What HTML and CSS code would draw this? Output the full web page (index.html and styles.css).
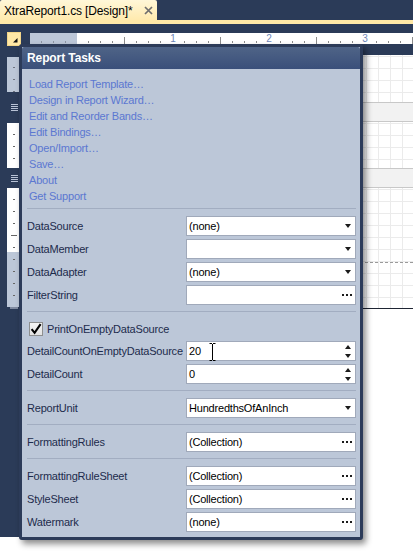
FILE: index.html
```html
<!DOCTYPE html>
<html>
<head>
<meta charset="utf-8">
<title>XtraReport1.cs [Design]</title>
<link rel="stylesheet" href="styles.css">
</head>
<body>
<div class="ide">
  <div class="tabstrip">
    <div class="tab">
      <span class="tab-title">XtraReport1.cs [Design]*</span>
      <svg class="tab-close" width="9" height="9" viewBox="0 0 9 9"><path d="M1 1L8 8M8 1L1 8" stroke="#6e6e6e" stroke-width="1.7" fill="none"/></svg>
    </div>
  </div>
  <div class="tabline"></div>
  <div class="designer">
    <div class="ruler-row">
      <div class="smart-btn"><svg width="14" height="14" viewBox="0 0 14 14"><path d="M10.5 6V10.5H6Z" fill="#111"/></svg></div>
      <div class="hruler">
        <div class="hr-margin"></div>
        <div class="hr-inch"><span class="hr-num">1</span></div>
        <div class="hr-inch"><span class="hr-num">2</span></div>
        <div class="hr-inch"><span class="hr-num">3</span></div>
        <div class="hr-inch"></div>
      </div>
    </div>
    <div class="work">
      <div class="vruler">
        <div class="vr-sec vr-a"></div>
        <div class="vr-gap vr-gap1"><span class="band-ico"></span></div>
        <div class="vr-sec vr-b"></div>
        <div class="vr-gap vr-gap2"><span class="band-ico"></span></div>
        <div class="vr-sec vr-c"></div>
        <div class="vr-end"></div>
      </div>
      <div class="surface">
        <div class="grid g1"></div>
        <div class="band-head"></div>
        <div class="grid g2"></div>
        <div class="band-head"></div>
        <div class="grid g3"><div class="margin-line"></div></div>
        <div class="page-end"></div>
      </div>
    </div>
  </div>

  <div class="tasks">
    <div class="tasks-head">Report Tasks</div>
    <div class="tasks-body">
      <div class="links">
        <a class="link">Load Report Template…</a>
        <a class="link">Design in Report Wizard…</a>
        <a class="link">Edit and Reorder Bands…</a>
        <a class="link">Edit Bindings…</a>
        <a class="link">Open/Import…</a>
        <a class="link">Save…</a>
        <a class="link">About</a>
        <a class="link">Get Support</a>
      </div>
      <div class="sep"></div>
      <div class="props">
        <span class="lbl">DataSource</span>
        <div class="field"><span class="val">(none)</span><span class="dd"></span></div>
        <span class="lbl">DataMember</span>
        <div class="field"><span class="val"></span><span class="dd"></span></div>
        <span class="lbl">DataAdapter</span>
        <div class="field"><span class="val">(none)</span><span class="dd"></span></div>
        <span class="lbl">FilterString</span>
        <div class="field"><span class="val"></span><span class="dots"><i></i><i></i><i></i></span></div>
      </div>
      <div class="sep"></div>
      <div class="props props-check">
        <label class="check-row"><span class="checkbox"><svg width="12" height="12" viewBox="0 0 12 12"><path d="M1.6 6.2L4.6 9.8L10.6 1.2" stroke="#000" stroke-width="2.1" fill="none"/></svg></span><span class="lbl check-lbl">PrintOnEmptyDataSource</span></label>
        <span class="lbl">DetailCountOnEmptyDataSource</span>
        <div class="field"><span class="val">20</span><span class="spin"><i class="up"></i><i class="down"></i></span>
          <svg class="ibeam" width="7" height="18" viewBox="0 0 7 18"><path d="M0.5 0.5H3M4 0.5H6.5M3.5 1V17M0.5 17.5H3M4 17.5H6.5" stroke="#000" stroke-width="1" fill="none"/></svg>
        </div>
        <span class="lbl">DetailCount</span>
        <div class="field"><span class="val">0</span><span class="spin"><i class="up"></i><i class="down"></i></span></div>
      </div>
      <div class="sep"></div>
      <div class="props">
        <span class="lbl">ReportUnit</span>
        <div class="field"><span class="val">HundredthsOfAnInch</span><span class="dd"></span></div>
      </div>
      <div class="sep"></div>
      <div class="props">
        <span class="lbl">FormattingRules</span>
        <div class="field"><span class="val">(Collection)</span><span class="dots"><i></i><i></i><i></i></span></div>
      </div>
      <div class="sep"></div>
      <div class="props props-last">
        <span class="lbl">FormattingRuleSheet</span>
        <div class="field"><span class="val">(Collection)</span><span class="dots"><i></i><i></i><i></i></span></div>
        <span class="lbl">StyleSheet</span>
        <div class="field"><span class="val">(Collection)</span><span class="dots"><i></i><i></i><i></i></span></div>
        <span class="lbl">Watermark</span>
        <div class="field"><span class="val">(none)</span><span class="dots"><i></i><i></i><i></i></span></div>
      </div>
    </div>
  </div>
</div>
</body>
</html>
```
FILE: styles.css
```css
* { box-sizing: border-box; margin: 0; padding: 0; }
html, body { width: 413px; height: 552px; overflow: hidden; }
body {
  background: #ffffff;
  font-family: "Liberation Sans", Arial, sans-serif;
  font-size: 11px;
  color: #000;
}

.ide {
  position: relative;
  height: 537px;
  background-color: #2b3b58;
  display: flex;
  flex-direction: column;
}

/* ---------- document tab ---------- */
.tabstrip { height: 20px; display: flex; }
.tab {
  width: 157px;
  height: 20px;
  background: linear-gradient(#fff7d8, #ffeaae);
  border-radius: 2px 2px 0 0;
  display: flex;
  align-items: center;
  padding: 1px 0 0 4px;
}
.tab-title { font-size: 12px; letter-spacing: -0.15px; color: #000; width: 140px; white-space: nowrap; }
.tab-close { display: block; }
.tabline { height: 4px; background: #ffe8a6; }

/* ---------- designer ---------- */
.designer { flex: 1; display: flex; flex-direction: column; }
.ruler-row {
  display: flex;
  align-items: flex-start;
  height: 14px;
  margin-top: 8px;
  padding-left: 7px;
}
.smart-btn {
  width: 14px;
  height: 14px;
  background: #ffe8a6;
  border: 1px solid #f3d68a;
}
.smart-btn svg { display: block; margin: -1px 0 0 -1px; }

.hruler {
  margin: 1px 0 0 9px;
  height: 11px;
  flex: 1;
  background: #fff;
  display: flex;
  overflow: hidden;
}
.hr-margin {
  flex: 0 0 47px;
  background:
    repeating-linear-gradient(to right, transparent 0 10px, #8d95a3 10px 11px, transparent 11px 12px) 1px 8px / 36px 2px no-repeat,
    #bcc7d8;
}
.hr-inch {
  flex: 0 0 96px;
  display: flex;
  justify-content: flex-end;
  background:
    linear-gradient(to right, transparent 47px, #8c8c8c 47px 48px, transparent 48px) 0 4px / 96px 7px no-repeat,
    repeating-linear-gradient(to right, transparent 0 11px, #8c8c8c 11px 12px) 0 8px / 84px 2px no-repeat;
}
.hr-num {
  width: 6px;
  margin-right: -3px;
  text-align: center;
  font-size: 10px;
  line-height: 11px;
  color: #6f87b8;
}

.work { flex: 1; display: flex; padding-left: 7px; }

/* vertical ruler */
.vruler { width: 12px; margin-top: 11px; display: flex; flex-direction: column; }
.vr-sec { background-repeat: no-repeat; }
.vr-a {
  height: 35px;
  background:
    repeating-linear-gradient(to bottom, transparent 0 10px, #6d7380 10px 11px, transparent 11px 12px) 6px 0 / 2px 35px no-repeat,
    #bcc7d8;
}
.vr-b {
  height: 45px;
  background:
    repeating-linear-gradient(to bottom, transparent 0 11px, #666 11px 12px) 6px 0 / 2px 45px no-repeat,
    #fff;
}
.vr-c {
  height: 119px;
  background:
    linear-gradient(to bottom, transparent 47px, #666 47px 48px, transparent 48px) 4px 0 / 6px 119px no-repeat,
    repeating-linear-gradient(to bottom, transparent 0 11px, #666 11px 12px) 6px 0 / 2px 119px no-repeat,
    linear-gradient(to bottom, #fff 0 64px, #bcc7d8 64px);
}
.vr-gap { display: flex; justify-content: center; align-items: center; }
.vr-gap1 { height: 31px; }
.vr-gap2 { height: 20px; }
.band-ico {
  width: 7px;
  height: 7px;
  margin-left: 2px;
  background: repeating-linear-gradient(to bottom, #b9c3d6 0 1px, transparent 1px 2px);
}
.vr-end { width: 8px; height: 2px; margin: 0 0 0 3px; background: #7f8aa0; }

/* design surface */
.surface {
  flex: 1;
  margin: 9px 0 0 11px;
  background: #fff;
  display: flex;
  flex-direction: column;
}
.grid {
  background-color: #fff;
  background-image:
    linear-gradient(to right, #ebebeb 1px, transparent 1px),
    linear-gradient(to bottom, #ebebeb 1px, transparent 1px);
  background-size: 12px 12px;
  background-position: 0 1px;
}
.g1 { height: 47px; }
.g2 { height: 46px; }
.g3 { height: 120px; padding-top: 74px; }
.band-head {
  height: 20px;
  background: #f2f2f2;
  border-top: 1px solid #c8c8c8;
  border-bottom: 1px solid #c8c8c8;
}
.margin-line { border-top: 1px dashed #9a9a9a; }
.page-end { height: 1px; background: #1e2533; }

/* ---------- smart tag panel ---------- */
.tasks {
  position: absolute;
  left: 19px;
  top: 44px;
  width: 344px;
  height: 496px;
  border: 3px solid #2c3b59;
  border-radius: 3px;
  background: #bcc7d8;
  box-shadow: 3px 4px 6px rgba(0, 0, 0, 0.45);
  display: flex;
  flex-direction: column;
}
.tasks-head {
  height: 22px;
  flex: 0 0 22px;
  background: linear-gradient(#4f6487, #3a4f7a);
  border-radius: 2px 2px 0 0;
  color: #fff;
  font-weight: bold;
  font-size: 12px;
  letter-spacing: -0.1px;
  padding-left: 5px;
  display: flex;
  align-items: center;
}
.tasks-body { flex: 1; display: flex; flex-direction: column; }

.links { display: flex; flex-direction: column; padding: 7px 0 4px 7px; }
.link {
  display: block;
  height: 16px;
  line-height: 16px;
  color: #5b77d1;
  letter-spacing: -0.2px;
  cursor: pointer;
}

.sep { height: 1px; margin: 0 4px 0 5px; background: #a2adc1; }

.props {
  display: grid;
  grid-template-columns: 159px 170px;
  grid-auto-rows: 20px;
  row-gap: 3px;
  padding: 7px 4px 6px 5px;
  align-items: center;
}
.props-check { grid-template-rows: 19px 20px 20px; }
.props-last { padding-bottom: 5px; }

.lbl { color: #1d2b4c; letter-spacing: -0.2px; white-space: nowrap; }

.check-row { grid-column: 1 / 3; display: flex; align-items: center; padding-left: 2px; }
.checkbox {
  width: 14px;
  height: 14px;
  border: 1px solid #8e8f8f;
  background: linear-gradient(#f4f4f4, #e3e3e3);
  display: flex;
  align-items: center;
  justify-content: center;
  margin-right: 4px;
}
.checkbox svg { display: block; }

.field {
  position: relative;
  height: 20px;
  background: #fff;
  border: 1px solid #a0a9ba;
  display: flex;
  align-items: center;
  padding: 0 4px 0 2px;
}
.val { flex: 1; color: #000; letter-spacing: -0.2px; white-space: nowrap; }
.dd {
  width: 0;
  height: 0;
  border-left: 3.5px solid transparent;
  border-right: 3.5px solid transparent;
  border-top: 4px solid #1b1b1b;
}
.dots { display: flex; gap: 2px; margin-right: -1px; }
.dots i { width: 2px; height: 2px; background: #1b1b1b; display: block; }
.spin { display: flex; flex-direction: column; gap: 5px; }
.spin i { display: block; width: 0; height: 0; border-left: 3.5px solid transparent; border-right: 3.5px solid transparent; }
.spin .up { border-bottom: 4px solid #1b1b1b; }
.spin .down { border-top: 4px solid #1b1b1b; }

.ibeam { position: absolute; left: 22px; top: 1px; }
```
